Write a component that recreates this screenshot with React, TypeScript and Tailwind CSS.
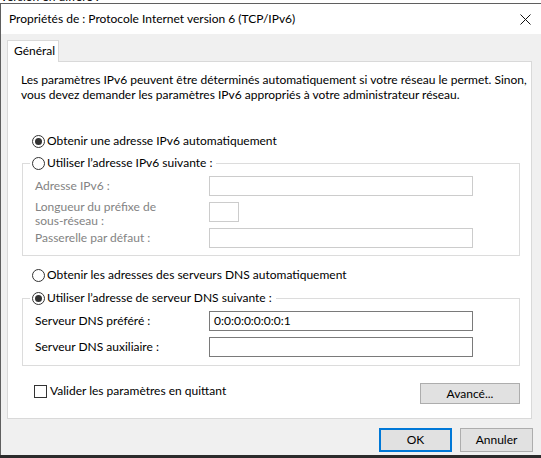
import React from "react";

const ui = "font-[Lato,'Liberation_Sans',sans-serif] text-[12px]";

function Radio({ checked, label }: { checked?: boolean; label: string }) {
  return (
    <span className="flex items-center gap-[2px]">
      <span className="flex h-[13px] w-[13px] items-center justify-center rounded-full border border-[#333333] bg-white">
        {checked && <span className="h-[7px] w-[7px] rounded-full bg-[#333333]" />}
      </span>
      <span className="whitespace-nowrap">{label}</span>
    </span>
  );
}

function Field({ disabled, value, w = "w-[264px]" }: { disabled?: boolean; value?: string; w?: string }) {
  return (
    <div
      className={`flex h-[20px] ${w} items-center border bg-white pl-[4px] ${
        disabled ? "border-[#cccccc]" : "border-[#7a7a7a]"
      }`}
    >
      {value}
    </div>
  );
}

function Button({ label, focused, w = "w-[73px]", h = "h-[24px]" }: { label: string; focused?: boolean; w?: string; h?: string }) {
  return (
    <div
      className={`flex ${w} ${h} items-center justify-center bg-[#e1e1e1] ${
        focused ? "border-2 border-[#0078d7]" : "border border-[#adadad]"
      }`}
    >
      {label}
    </div>
  );
}

export default function App() {
  return (
    <div className={`flex h-[458px] w-[541px] flex-col overflow-hidden bg-[#f0f0f0] text-black ${ui}`}>
      {/* window behind */}
      <div className="h-[3px] overflow-hidden bg-white">
        <div className="-mt-[10px] pl-[1px] leading-[13px] whitespace-nowrap">version en différé :</div>
      </div>

      <div className="flex flex-1 flex-col border-l border-t border-[#5f5f5f]">
        {/* title bar */}
        <div className="flex h-[30px] items-center justify-between bg-white pl-[8px] pr-[10px]">
          <span className="whitespace-nowrap">Propriétés de : Protocole Internet version 6 (TCP/IPv6)</span>
          <svg width="11" height="11" viewBox="0 0 11 11" className="shrink-0">
            <path d="M0.5 0.5L10.5 10.5M10.5 0.5L0.5 10.5" stroke="#111" strokeWidth="1" />
          </svg>
        </div>

        {/* body */}
        <div className="flex flex-1 flex-col pl-[6px] pt-[6px]">
          <div className="flex">
            <div className="relative z-10 -mb-px flex h-[22px] w-[52px] items-center border border-b-0 border-[#d9d9d9] bg-white pl-[6px] pb-[1px]">
              Général
            </div>
          </div>

          <div className="flex h-[358px] w-[525px] flex-col border border-[#d9d9d9] bg-white">
            <p className="pl-[13px] pt-[10px] leading-[15px] whitespace-nowrap">
              Les paramètres IPv6 peuvent être déterminés automatiquement si votre réseau le permet. Sinon,
              <br />
              vous devez demander les paramètres IPv6 appropriés à votre administrateur réseau.
            </p>

            <div className="mt-[29px] flex h-[20px] items-center pl-[24px]">
              <Radio checked label="Obtenir une adresse IPv6 automatiquement" />
            </div>

            <fieldset className="ml-[14px] mt-[2px] w-[498px] border border-[#dcdcdc] pb-[7px]">
              <legend className="ml-[7px] flex h-[20px] items-center pl-[2px] pr-[4px]">
                <Radio label="Utiliser l’adresse IPv6 suivante :" />
              </legend>
              <div className="mt-[3px] flex flex-col gap-[6px] pl-[12px] text-[#838383]">
                <div className="flex h-[20px] items-center">
                  <span className="w-[174px]">Adresse IPv6 :</span>
                  <Field disabled />
                </div>
                <div className="flex h-[20px] items-start">
                  <span className="-mt-[2px] flex w-[174px] flex-col leading-[14px]">
                    <span>Longueur du préfixe de</span>
                    <span>sous-réseau :</span>
                  </span>
                  <Field disabled w="w-[30px]" />
                </div>
                <div className="flex h-[20px] items-center">
                  <span className="w-[174px]">Passerelle par défaut :</span>
                  <Field disabled />
                </div>
              </div>
            </fieldset>

            <div className="mt-[9px] flex h-[20px] items-center pl-[24px]">
              <Radio label="Obtenir les adresses des serveurs DNS automatiquement" />
            </div>

            <fieldset className="ml-[14px] mt-[3px] w-[498px] border border-[#dcdcdc] pb-[8px]">
              <legend className="ml-[7px] flex h-[20px] items-center pl-[2px] pr-[4px]">
                <Radio checked label="Utiliser l’adresse de serveur DNS suivante :" />
              </legend>
              <div className="mt-[3px] flex flex-col gap-[6px] pl-[12px]">
                <div className="flex h-[20px] items-center">
                  <span className="w-[174px]">Serveur DNS préféré :</span>
                  <Field value="0:0:0:0:0:0:0:1" />
                </div>
                <div className="flex h-[20px] items-center">
                  <span className="w-[174px]">Serveur DNS auxiliaire :</span>
                  <Field />
                </div>
              </div>
            </fieldset>

            <div className="mt-[17px] flex items-start justify-between pl-[26px] pr-[11px]">
              <label className="-mt-[1px] flex items-center gap-[3px]">
                <span className="h-[13px] w-[13px] border border-[#333333] bg-white" />
                <span className="whitespace-nowrap">Valider les paramètres en quittant</span>
              </label>
              <Button label="Avancé..." w="w-[100px]" h="h-[21px]" />
            </div>
          </div>

          <div className="mt-[9px] flex justify-end gap-[8px] pr-[8px]">
            <Button label="OK" focused />
            <Button label="Annuler" />
          </div>
        </div>
      </div>

      <div className="h-[3px] bg-[#2b2b2b]" />
    </div>
  );
}
